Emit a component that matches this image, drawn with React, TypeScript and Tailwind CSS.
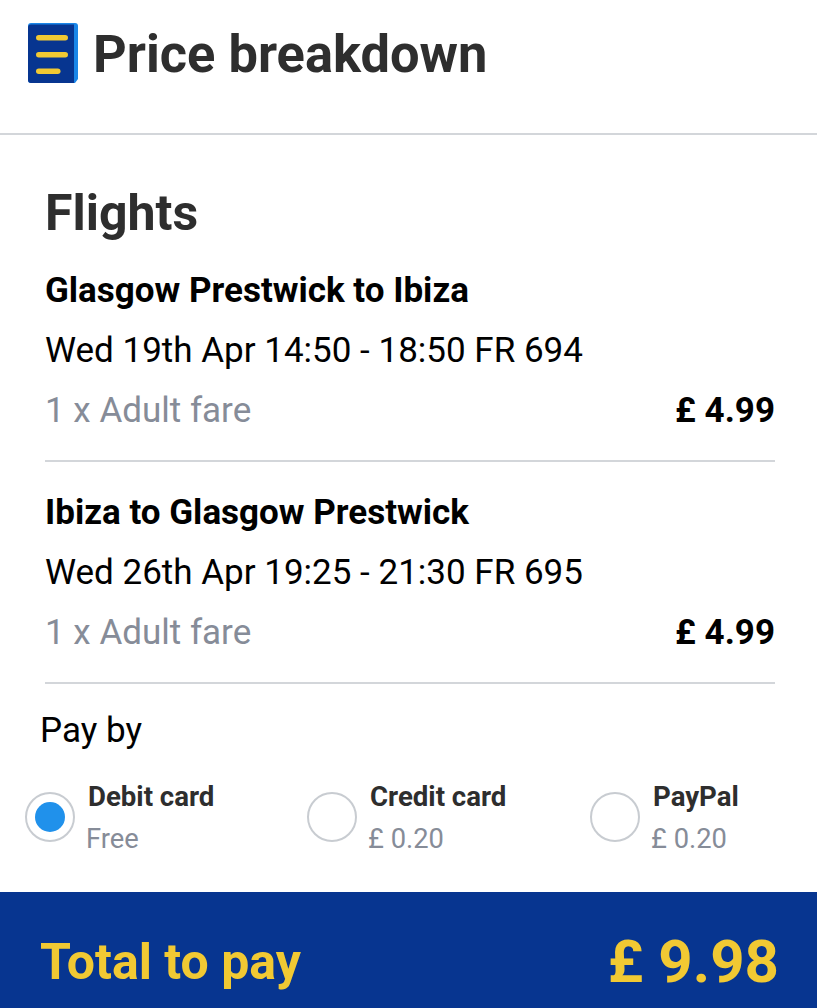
const font = { fontFamily: "Roboto, sans-serif" }

type Leg = { route: string; times: string; fare: string; price: string }

const legs: Leg[] = [
  { route: "Glasgow Prestwick to Ibiza", times: "Wed 19th Apr 14:50 - 18:50 FR 694", fare: "1 x Adult fare", price: "£ 4.99" },
  { route: "Ibiza to Glasgow Prestwick", times: "Wed 26th Apr 19:25 - 21:30 FR 695", fare: "1 x Adult fare", price: "£ 4.99" },
]

const methods = [
  { name: "Debit card", cost: "Free", selected: true, width: "w-[282px]" },
  { name: "Credit card", cost: "£ 0.20", selected: false, width: "w-[283px]" },
  { name: "PayPal", cost: "£ 0.20", selected: false, width: "w-[200px]" },
]

function ReceiptIcon() {
  return (
    <svg width="50" height="60" viewBox="0 0 50 60" className="shrink-0">
      <path d="M3 0h44a3 3 0 0 1 3 3v53l-3 4H3a3 3 0 0 1-3-3V3a3 3 0 0 1 3-3z" fill="#1a86e8" />
      <path d="M3 1.5h43v58.5H3a3 3 0 0 1-3-3V4.5a3 3 0 0 1 3-3z" fill="#073590" />
      <rect x="8" y="12" width="32" height="5.5" rx="2.75" fill="#f1c933" />
      <rect x="8" y="29" width="32" height="5.5" rx="2.75" fill="#f1c933" />
      <rect x="8" y="45.5" width="24.5" height="5.5" rx="2.75" fill="#f1c933" />
    </svg>
  )
}

function LegRow({ leg }: { leg: Leg }) {
  return (
    <div className="h-[222px] border-b-2 border-[#d3d6da] pt-[21px] text-[35px] leading-[60px]">
      <div className="font-bold text-black">{leg.route}</div>
      <div className="text-black">{leg.times}</div>
      <div className="flex items-center justify-between">
        <span className="text-[#868c98]">{leg.fare}</span>
        <span className="font-bold text-black">{leg.price}</span>
      </div>
    </div>
  )
}

export default function App() {
  return (
    <div className="flex h-[1008px] w-[817px] flex-col overflow-hidden bg-white" style={font}>
      <header className="flex h-[135px] items-start gap-[15px] border-b-2 border-[#d3d6da] pt-[23px] pl-[28px]">
        <ReceiptIcon />
        <h1 className="text-[52.4px] leading-[62px] font-bold text-[#2e2e2e]">Price breakdown</h1>
      </header>

      <section className="pr-[42px] pl-[45px] pt-[48px]">
        <h2 className="h-[70px] text-[50px] leading-[60px] font-bold text-[#2e2e2e]">Flights</h2>
        <div className="mt-[-13px]">
          {legs.map((leg) => (
            <LegRow key={leg.times} leg={leg} />
          ))}
        </div>
      </section>

      <section className="flex-1 pt-[27px]">
        <p className="pl-[40px] text-[35px] leading-[40px] text-black">Pay by</p>
        <div className="mt-[25px] flex pl-[25px]">
          {methods.map((m) => (
            <div key={m.name} className={`flex ${m.width}`}>
              <div className="mt-[16px] flex h-[50px] w-[50px] items-center justify-center rounded-full border-2 border-[#c8ccd1]">
                {m.selected && <div className="h-[30px] w-[30px] rounded-full bg-[#2091eb]" />}
              </div>
              <div className="ml-[11px] pt-[1px]">
                <div className="ml-[2px] text-[27.6px] leading-[40px] font-bold text-[#2e2e2e]">{m.name}</div>
                <div className="text-[27.3px] leading-[44px] text-[#868c98]">{m.cost}</div>
              </div>
            </div>
          ))}
        </div>
      </section>

      <footer className="flex h-[116px] items-center justify-between bg-[#073590] pt-[24px] pr-[38px] pl-[40px] font-bold text-[#f1c933]">
        <span className="text-[50px]">Total to pay</span>
        <span className="text-[60px]">£ 9.98</span>
      </footer>
    </div>
  )
}
